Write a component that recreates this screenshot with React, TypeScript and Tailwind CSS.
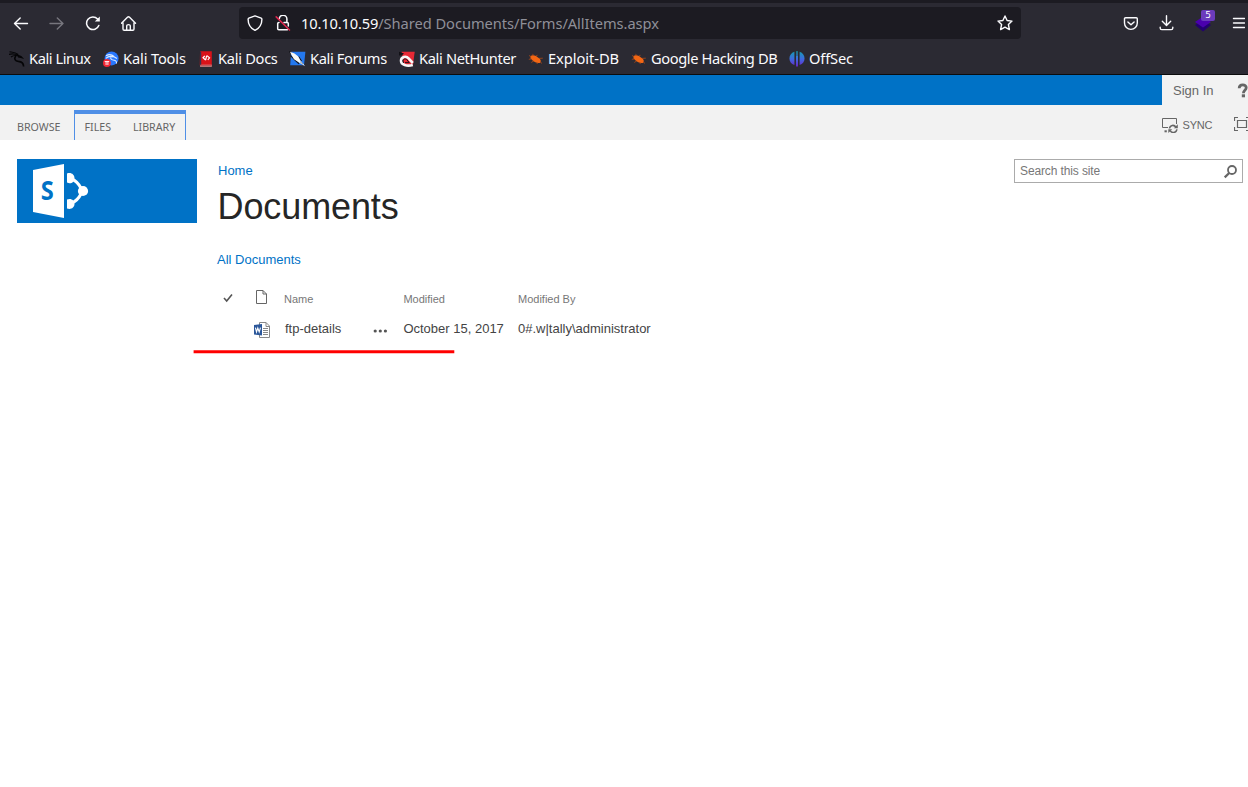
import React from "react";

type Kids = { children?: React.ReactNode };

function Svg({ w, h, box, className = "", children }: Kids & { w: number; h: number; box?: string; className?: string }) {
  return (
    <svg width={w} height={h} viewBox={box ?? `0 0 ${w} ${h}`} fill="none" className={`block shrink-0 ${className}`}>
      {children}
    </svg>
  );
}

const line = { stroke: "#fbfbfe", strokeWidth: 1.4, strokeLinecap: "round" as const, strokeLinejoin: "round" as const };

const Arrow = ({ flip = false }: { flip?: boolean }) => (
  <Svg w={16} h={16}>
    <path
      d={flip ? "M1 8.5H14M8.3 3L14 8.5L8.3 14" : "M14.5 8.5H1.5M7.2 3L1.5 8.5L7.2 14"}
      {...line}
      stroke={flip ? "#77767e" : "#fbfbfe"}
    />
  </Svg>
);

const Reload = () => (
  <Svg w={16} h={16}>
    <path d="M13.8 10.5A6.3 6.3 0 1 1 12.6 4.1L13.5 5" {...line} strokeWidth={1.5} />
    <path d="M14.8 1.5V6.5H9.8Z" fill="#fbfbfe" />
  </Svg>
);

const Home = () => (
  <Svg w={16} h={16}>
    <path d="M.5 8.3L6.7 2.1Q7.5 1.4 8.3 2.1L14.5 8.3M2 7.5V14Q2 15.2 3.2 15.2H11.8Q13 15.2 13 14V7.5M5.7 15V10.8Q5.7 9.6 7.5 9.6Q9.3 9.6 9.3 10.8V15" {...line} />
  </Svg>
);

const Shield = () => (
  <Svg w={16} h={16}>
    <path d="M8 .8L14.2 3.1Q14.9 3.4 14.9 4.3C14.9 9.5 12.6 13.2 8 15.4C3.4 13.2 1.1 9.5 1.1 4.3Q1.1 3.4 1.8 3.1Z" {...line} />
  </Svg>
);

const Lock = () => (
  <Svg w={16} h={16}>
    <path d="M4.3 3.8A3.8 3.8 0 0 1 11.9 4.2V7M9 7.4H12.2Q13.3 7.4 13.3 8.5V11M4 7.4Q2.7 7.4 2.7 8.5V13.8Q2.7 14.8 3.8 14.8H12.4" {...line} strokeWidth={1.5} />
    <path d="M1.2 1.9L14.5 15" stroke="#e22850" strokeWidth="1.5" strokeLinecap="round" />
  </Svg>
);

const Star = () => (
  <Svg w={16} h={16}>
    <path d="M8 1L10.1 5.5L15 6.1L11.4 9.5L12.4 14.6L8 12.2L3.6 14.6L4.6 9.5L1 6.1L5.9 5.5Z" {...line} />
  </Svg>
);

const Pocket = () => (
  <Svg w={16} h={16}>
    <path d="M2.6 2.7H13.2Q14.3 2.7 14.3 3.8V8A6.4 6.4 0 0 1 1.5 8V3.8Q1.5 2.7 2.6 2.7ZM4.9 6.9L8 9.8L11.1 6.9" {...line} />
  </Svg>
);

const Download = () => (
  <Svg w={16} h={16}>
    <path d="M7.5 .7V10.2M3.3 6.2L7.5 10.4L11.7 6.2M1.2 12.2V13Q1.2 14.6 2.8 14.6H12.2Q13.8 14.6 13.8 13V12.2" {...line} />
  </Svg>
);

const Menu = () => (
  <Svg w={13} h={12}>
    <path d="M1.5 1.5H12.6M1.5 6H12.6M1.5 10.5H12.6" {...line} />
  </Svg>
);

const KaliDragon = () => (
  <Svg w={16} h={16}>
    <path d="M.5 .7C3 1.2 6 1 9.2 3.4M0 3.4C3 2.4 6.5 3 9.5 4.4M2 6C4 4.4 7 4.2 10 5" stroke="#050507" strokeWidth="1.1" />
    <path d="M6.8 5C4.6 7.8 6.2 10 9.4 10.4C12.6 10.7 14.6 12 14.6 15.6" stroke="#050507" strokeWidth="1.6" />
    <path d="M8.5 3.6L12.3 5L15.2 8L11.7 6.9L9 6.6Z" fill="#050507" />
  </Svg>
);

const KaliTools = () => (
  <Svg w={16} h={16}>
    <circle cx="8.6" cy="7.4" r="7" fill="#2777ff" />
    <path d="M3 4.8C6 3 9 3.6 11 5.4M2.8 7.4C5.4 5 8 5 10.5 6M7.8 6.2C7.2 8.4 9 8.8 11.2 9.2C13.2 9.6 13.8 11 13.4 12.5M10.5 5.6L14 7.6" stroke="#dceaff" strokeWidth="1.1" />
    <circle cx="3.9" cy="12" r="3.9" fill="#f32735" />
    <path d="M1.7 10.5H6.2M3.1 10.8V14M4.9 10.8V14" stroke="white" strokeWidth=".9" />
  </Svg>
);

const KaliDocs = () => (
  <Svg w={13} h={16}>
    <path d="M1 1Q1 .3 2 .3H12.8V15.5H2Q.8 15.5 .8 14Z" fill="#d91219" />
    <path d="M1 13.8H12.8V15.5H1Z" fill="#e9c9c9" />
    <path d="M1 14.5H12.8" stroke="#9c1116" strokeWidth=".6" />
    <path d="M1.6 .8V13.8" stroke="#37304d" strokeWidth="1.2" />
    <path d="M5.8 4.8L4 6.8L6.6 9M8 4.6L10.5 6.8L8.8 9M7.7 4.6L6.6 9.2" stroke="white" strokeWidth="1.2" />
  </Svg>
);

const KaliForums = () => (
  <Svg w={17} h={16}>
    <path d="M2.2 .8H16.4L15 14.3H1.2Z" fill="#2478ef" />
    <path d="M0 .5L5 4M1.5 4.5L6 9L10 12.8M9.5 5.5L12.5 10" stroke="#15151b" strokeWidth="1.2" />
    <path d="M1 .8L5.5 2.6L9.3 5.4L11.4 9.4L16.2 15.2L10.8 12L5 8.3L2.8 4.6Z" fill="#f8f8f4" />
    <path d="M11 10.6L14 13.2" stroke="#45454d" strokeWidth=".6" />
  </Svg>
);

const NetHunter = () => (
  <Svg w={16} h={16}>
    <path d="M2.5 .8H15.7L14 13.8H5Z" fill="#e72935" />
    <path d="M0 .8L5 2.6L3 4.2L0 4.4Z" fill="#111116" />
    <path d="M13.8 14C8 15.6 2 14 2 9.8C2 5.8 7 4.6 9.6 7.4L13.8 12" stroke="#f7f7f7" strokeWidth="2.6" />
    <path d="M4.6 12C2.8 9 5.4 7 7.6 8.4L10.2 11.6H6" stroke="#111116" strokeWidth=".9" />
  </Svg>
);

const Bug = () => (
  <Svg w={16} h={16}>
    <path d="M2.4 5.2Q4.5 3.2 8 5L12 8Q13.6 10.3 12.3 11.7Q9 12.7 5.4 10.2L2.6 7.6Z" fill="#f26614" />
    <path d="M3.2 5.7L1 4.5M3.5 8L.8 8.3M5.5 10L3.3 11.5M8.5 11.5L9.5 13M5.5 4.5L4.6 2.9M8 5L9.5 4.3M11 7.4L14.8 7.2M12 10.6L14 12.5" stroke="#ad4916" strokeWidth=".8" />
  </Svg>
);

const OffSec = () => (
  <Svg w={16} h={16}>
    <defs>
      <linearGradient id="offsec" gradientUnits="userSpaceOnUse" x1="0" y1="0" x2="0" y2="16">
        <stop stopColor="#129fad" />
        <stop offset=".5" stopColor="#3e6ae0" />
        <stop offset="1" stopColor="#6a20c8" />
      </linearGradient>
    </defs>
    <path d="M5.4 .8V14C-1.2 11.8 -1.2 3 5.4 .8ZM7 .3H9V15.6H7ZM10.6 .8C17.2 3 17.2 11.8 10.6 14Z" fill="url(#offsec)" />
    <path d="M8 .5V5" stroke="#2b2a33" strokeWidth=".6" />
  </Svg>
);

const bookmarks = [
  { label: "Kali Linux", icon: <KaliDragon />, box: "w-[94px]", text: "ml-[4px] tracking-[-0.43px]" },
  { label: "Kali Tools", icon: <KaliTools />, box: "w-[96px]", text: "ml-[4px] tracking-[-0.15px]" },
  { label: "Kali Docs", icon: <KaliDocs />, box: "w-[90px]", text: "ml-[6px] tracking-[-0.3px]" },
  { label: "Kali Forums", icon: <KaliForums />, box: "w-[110px]", text: "ml-[4px] tracking-[-0.38px]" },
  { label: "Kali NetHunter", icon: <NetHunter />, box: "w-[129px]", text: "ml-[4px] tracking-[-0.35px]" },
  { label: "Exploit-DB", icon: <Bug />, box: "w-[103px]", text: "ml-[4px] tracking-[-0.06px]" },
  { label: "Google Hacking DB", icon: <Bug />, box: "w-[158px]", text: "ml-[4px] tracking-[-0.4px]" },
  { label: "OffSec", icon: <OffSec />, box: "w-[80px]", text: "ml-[4px] tracking-[-0.15px]" },
];

function BrowserChrome() {
  return (
    <header className="h-[75px] border-b border-[#0c0c0d] bg-[#2b2a33] font-['Noto_Sans',sans-serif] text-[14.67px] text-[#fbfbfe]">
      <div className="h-[3px] bg-[#1c1b22]" />
      <div className="flex h-10 items-center">
        <nav className="flex w-[239px] items-center gap-5 pl-[13px]">
          <Arrow />
          <Arrow flip />
          <Reload />
          <Home />
        </nav>
        <div className="flex h-8 w-[782px] items-center rounded bg-[#1c1b22] pl-2">
          <Shield />
          <div className="ml-3"><Lock /></div>
          <div className="ml-[10px] grow whitespace-nowrap tracking-[-0.05px]">
            <span className="tracking-[-0.15px]">10.10.10.59</span>
            <span className="text-[#8f8f98]">/Shared Documents/Forms/AllItems.aspx</span>
          </div>
          <div className="mr-2"><Star /></div>
        </div>
        <div className="ml-[102px]"><Pocket /></div>
        <div className="ml-5"><Download /></div>
        <div className="relative ml-5 h-5 w-5">
          <Svg w={18} h={20}>
            <path d="M0 12L8 6.5L16 12L8 18.6Z" fill="#230070" />
            <path d="M0 9L8 3.5L16 9L8 14.6Z" fill="#4a00ad" />
          </Svg>
          <span className="absolute -top-[3px] left-[6px] flex h-[11px] w-[14px] items-center justify-center rounded-[2px] bg-[#6b3bbc] font-['DejaVu_Sans',sans-serif] text-[9px] leading-none">5</span>
        </div>
        <div className="ml-[17px]"><Menu /></div>
      </div>
      <div className="flex h-[31px] items-center pl-[9px]">
        {bookmarks.map((b) => (
          <div key={b.label} className={`flex shrink-0 items-center whitespace-nowrap ${b.box}`}>
            {b.icon}
            <span className={`pb-[2px] ${b.text}`}>{b.label}</span>
          </div>
        ))}
      </div>
    </header>
  );
}

function Ribbon() {
  return (
    <>
      <div className="flex h-[30px] bg-[#0072c6]">
        <div className="ml-auto flex w-[86px] items-center bg-[#f2f2f2] pl-[11px] pt-[2px] text-[13px] text-[#666]">
          <span className="w-[64px] whitespace-nowrap">Sign In</span>
          <Svg w={11} h={15} className="mb-[2px]">
            <path d="M2.2 5.2C2.2 .6 9.4 .9 9.2 4.7C9.2 7.4 6.4 7.2 6.4 10.2" stroke="#666" strokeWidth="2.8" />
            <path d="M4.8 11.3H8V14.3H4.8Z" fill="#666" />
          </Svg>
        </div>
      </div>
      <div className="flex h-[35px] items-end bg-[#f2f2f2] font-['Noto_Sans',sans-serif] text-[10.67px] text-[#666]">
        <div className="flex h-[30px] w-[74px] items-center pl-[17px] pt-[4px]">BROWSE</div>
        <div className="flex h-[30px] w-[112px] items-center border-x border-t-4 border-[#4f8fe6] pl-[9.5px]">
          <span className="w-[48.5px]">FILES</span>
          <span>LIBRARY</span>
        </div>
        <div className="ml-auto flex h-[30px] w-[86px] items-center font-['Liberation_Sans',sans-serif] text-[11px]">
          <Svg w={17} h={16}>
            <path d="M6 10.5H.5V1.5H14.5V7" stroke="#666" />
            <path d="M2.5 13.3H4.8V15.3H2.5Z" fill="#666" />
            <path d="M7.5 11.5C8 7.8 12.3 7.4 14 10.3M15 12.4C14 16.2 10 16.4 8.2 13.6" stroke="#666" strokeWidth="1.6" />
            <path d="M15.8 7.3V11.2H11.9ZM6.3 16V12.2H10.2Z" fill="#666" />
          </Svg>
          <span className="ml-[3.5px] w-[51.5px] tracking-[-0.2px]">SYNC</span>
          <Svg w={14} h={16} className="mb-[2px]">
            <path d="M4 1.5H.5V5M.5 11V14.5H4M12 1.5H15.5V5M12 14.5H15.5V11M3.5 4.5H12.5V11.5H3.5Z" stroke="#666" strokeWidth="1.2" />
          </Svg>
        </div>
      </div>
    </>
  );
}

function SiteLogo() {
  return (
    <div className="h-16 w-[180px] bg-[#0072c6]">
      <Svg w={90} h={64}>
        <path d="M54.5 20C59 21.5 62.5 26 64.5 30M54.5 44C59 42.5 62.5 38 64.5 34" stroke="white" strokeWidth="3" />
        <path d="M50 14.5C54 13 57.5 15.5 57.5 19.2C57.5 23.5 53.5 25.3 50 23.5ZM50 40.5C54 38.7 57.5 41.3 57.5 44.8C57.5 49 53.5 51 50 49.5Z" fill="white" />
        <circle cx="66" cy="32" r="5.1" fill="white" />
        <path d="M16 11L47 5V59L16 53Z" fill="white" />
        <text x="23.8" y="41.3" fill="#0072c6" fontFamily="Open Sans, sans-serif" fontWeight="700" fontSize="26.5" textLength="13" lengthAdjust="spacingAndGlyphs">S</text>
      </Svg>
    </div>
  );
}

function DocumentTable() {
  return (
    <div className="mt-[14px] grid w-[440px] grid-cols-[37px_30px_89px_30.4px_114.6px_139px] grid-rows-[30px_30px] items-center whitespace-nowrap text-[13px] text-[#444]">
      <div className="pb-[2px] pl-[6px]">
        <Svg w={10} h={10}><path d="M1 5L3.7 8L9 1.5" stroke="#555" strokeWidth="1.6" /></Svg>
      </div>
      <div className="pb-[5px] pl-px">
        <Svg w={13} h={15}>
          <path d="M1.5 1.5H8L11.5 5V14.5H1.5ZM8 1.5V5H11.5" stroke="#666" />
        </Svg>
      </div>
      <div className="text-[11px] text-[#777]">Name</div>
      <div />
      <div className="text-[11px] text-[#777]">Modified</div>
      <div className="text-[11px] text-[#777]">Modified By</div>
      <div />
      <div>
        <Svg w={17} h={17}>
          <path d="M5.5 1.5H12L15.5 5V16.5H5.5Z" fill="white" stroke="#888" />
          <path d="M12 1.5V5.5H16M9 7.5H14M9 9.5H14M9 11.5H14M9 13.5H14" stroke="#888" />
          <path d="M0 4L8 3V14.5L0 13.6Z" fill="#2b579a" />
          <path d="M1.4 6.6L2.5 11L3.8 7L5.2 11L6.5 6.6" stroke="white" strokeWidth="1.1" />
        </Svg>
      </div>
      <div className="pl-px">ftp-details</div>
      <Svg w={15} h={4} className="mt-[3px]">
        <circle cx="2.2" cy="2" r="1.6" fill="#555" /><circle cx="7.3" cy="2" r="1.6" fill="#555" /><circle cx="12.4" cy="2" r="1.6" fill="#555" />
      </Svg>
      <div>October 15, 2017</div>
      <div>0#.w|tally\administrator</div>
    </div>
  );
}

export default function App() {
  return (
    <div className="h-[787px] w-[1248px] overflow-hidden bg-white font-['Liberation_Sans',sans-serif]">
      <BrowserChrome />
      <Ribbon />
      <main className="flex pt-[19px] pl-[17px]">
        <SiteLogo />
        <section className="relative ml-5 w-[797px]">
          <div className="pl-px pt-[2px] text-[13px] leading-5 text-[#0072c6]">Home</div>
          <h1 className="pl-[0.5px] text-[36px] leading-[52px] tracking-[-0.1px] text-[#262626]">Documents</h1>
          <div className="mt-[17px] text-[13px] leading-5 text-[#0072c6]">All Documents</div>
          <DocumentTable />
          <Svg w={262} h={4} className="absolute top-[191px] -left-[24px]">
            <path d="M.6 1.8H261.3" stroke="#ff0000" strokeWidth="3" />
          </Svg>
        </section>
        <div className="flex h-6 w-[229px] items-center justify-between border border-[#ababab] pl-[5px] pr-1 text-[12px] tracking-[-0.12px] text-[#777]">
          Search this site
          <Svg w={15} h={15}>
            <circle cx="9" cy="6" r="4" stroke="#666" strokeWidth="1.8" />
            <path d="M6.2 9L1.7 13.3" stroke="#666" strokeWidth="2.3" />
          </Svg>
        </div>
      </main>
    </div>
  );
}
